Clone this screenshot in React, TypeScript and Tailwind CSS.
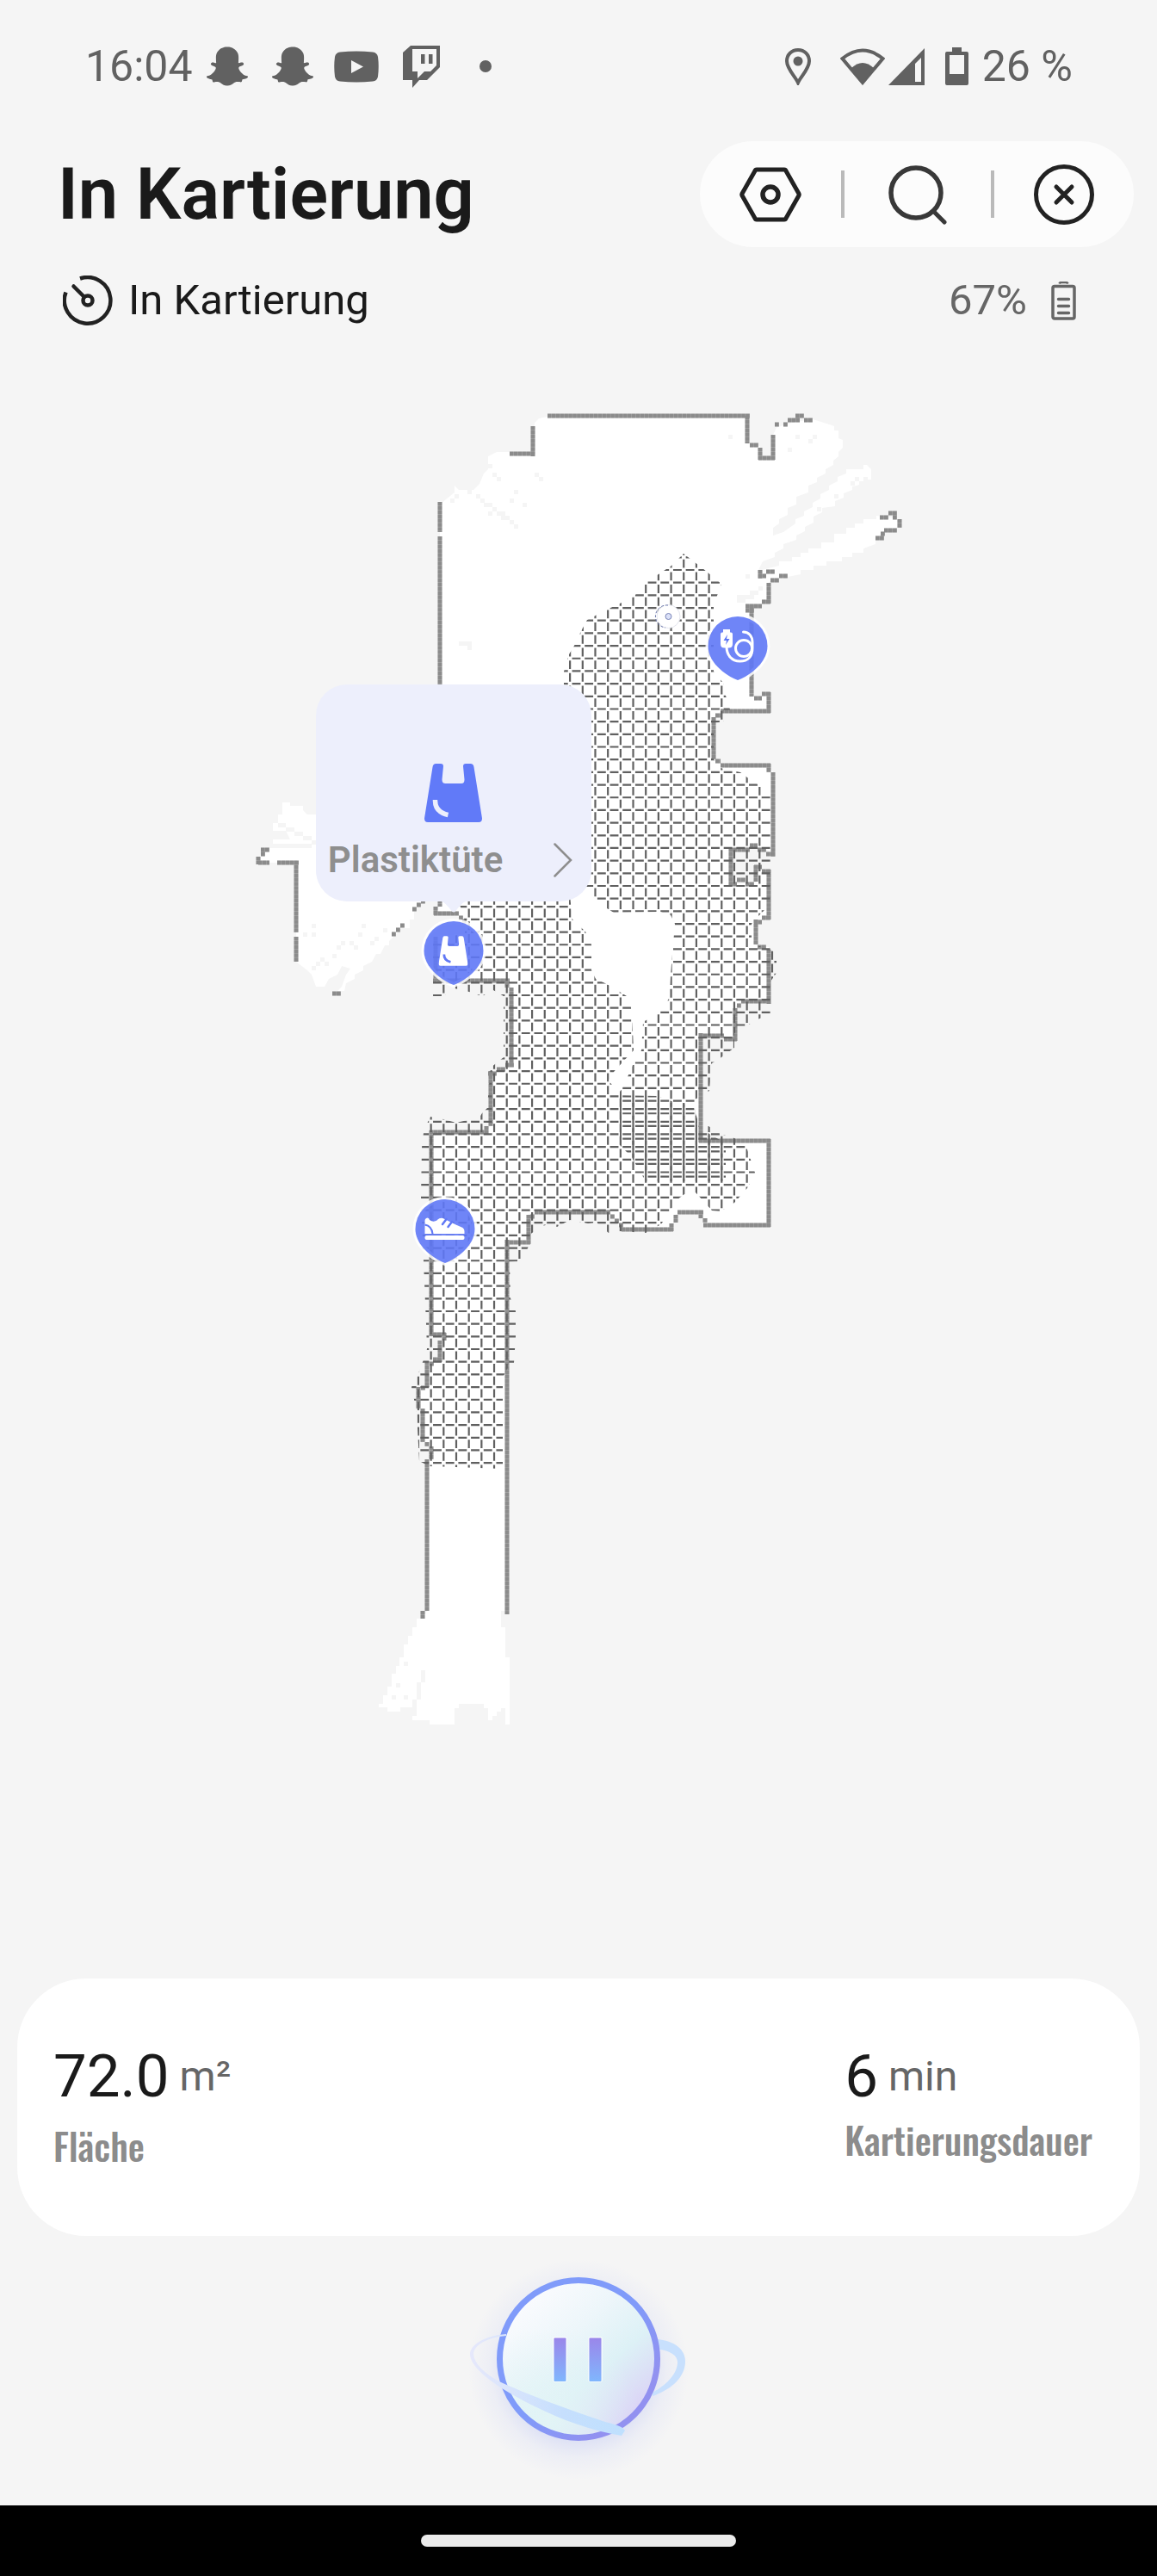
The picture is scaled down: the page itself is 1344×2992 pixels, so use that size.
import type {ReactNode} from "react";
import {FaSnapchatGhost} from "react-icons/fa";

/* Map drawing space: x 0..1344, y 400..2298 */
const MAP_W = 1344;
const MAP_TOP = 400;
const MAP_H = 1898;
const STEP = 14.68;

const FLOOR =
    "636,484 626,486 621,491 619,528 592,525 577,525 567,530 567,545 562,550 557,562 550,569 533,569 528,564 528,572 518,580 " +
    "511,586 511,1050 506,1063 530,1063 540,1072 540,1085 506,1087 506,1139 592,1139 594,1147 594,1239 570,1246 570,1308 " +
    "562,1315 501,1315 501,1550 515,1550 511,1580 496,1583 496,1611 487,1613 487,1636 491,1636 491,1675 501,1680 501,1693 " +
    "496,1695 496,1871 491,1880 484,1880 484,1890 479,1890 479,1900 474,1900 474,1910 469,1910 469,1925 464,1925 464,1935 " +
    "460,1935 460,1944 455,1944 455,1959 450,1959 450,1969 445,1969 445,1979 440,1979 440,1983 450,1983 450,1988 465,1988 " +
    "465,1983 479,1983 484,1983 484,1993 479,1993 479,1998 499,1998 499,2003 528,2003 528,1984 533,1984 533,1979 562,1979 " +
    "562,1984 567,1984 567,1998 572,1998 572,1993 577,1993 577,1988 582,1988 582,1984 587,1984 587,2003 592,2003 592,1925 " +
    "587,1925 587,1890 582,1890 582,1871 589,1871 589,1442 614,1442 614,1410 621,1408 709,1408 721,1428 780,1428 785,1410 " +
    "814,1408 819,1423 893,1423 893,1325 814,1325 814,1202 841,1203 854,1207 854,1170 861,1163 893,1163 893,1100 878,1098 " +
    "878,1070 893,1065 893,1010 878,1007 878,1025 849,1027 849,987 871,982 890,987 898,992 898,897 893,889 834,887 829,880 " +
    "829,833 837,826 893,826 893,806 878,811 873,805 873,705 893,700 893,676 915,670 930,667 930,662 945,662 945,657 960,657 " +
    "960,652 978,652 978,647 990,647 990,642 1003,642 1003,637 1017,632 1017,625 1030,615 1042,613 1042,602 1018,599 1018,603 " +
    "1003,603 1003,608 993,608 993,613 983,613 983,620 969,620 969,630 954,630 954,637 939,637 939,642 930,642 930,647 920,647 " +
    "920,652 905,652 905,657 885,662 881,662 886,652 900,647 900,642 910,637 910,632 925,627 925,622 935,617 935,612 945,607 " +
    "945,600 955,595 955,590 970,588 970,582 980,578 980,573 990,569 990,565 1003,562 1003,557 1012,557 1012,545 1007,540 " +
    "1003,540 1003,545 983,545 983,550 973,554 973,559 963,564 963,569 953,574 953,579 944,584 944,589 934,594 934,599 924,603 " +
    "924,608 910,618 898,622 898,613 905,608 905,603 915,598 915,590 925,586 925,577 939,572 939,564 949,560 949,555 959,550 " +
    "959,545 968,540 968,535 974,530 974,525 979,520 979,511 974,509 974,500 969,500 969,495 954,490 944,487 925,490 912,493 " +
    "902,497 898,505 898,532 883,532 883,518 868,515 868,484";

const LEFT_ROOM =
    "328,932 337,932 337,936 352,936 352,941 357,946 520,946 520,1047 491,1047 481,1058 481,1068 476,1068 476,1078 466,1078 " +
    "462,1083 452,1093 452,1098 447,1098 442,1108 437,1108 432,1117 422,1122 422,1127 412,1132 412,1137 402,1142 400,1151 392,1151 " +
    "397,1146 402,1132 407,1125 397,1122 392,1132 382,1137 377,1146 367,1146 362,1132 357,1127 344,1117 344,1002 300,1002 " +
    "305,985 362,985 362,980 317,980 317,975 337,975 332,965 317,965 317,956 323,956 323,946 328,946";

const CLEANED_UPPER =
    "794,643 816,660 838,678 829,703 829,780 840,793 843,808 848,824 840,838 829,840 829,882 837,892 860,897 868,903 882,912 " +
    "895,925 895,1050 882,1063 873,1073 873,1098 893,1100 902,1107 902,1130 895,1140 895,1178 880,1184 870,1190 853,1200 " +
    "853,1217 838,1228 827,1235 824,1267 810,1275 806,1282 812,1310 843,1328 843,1372 750,1372 733,1343 720,1330 720,1268 " +
    "725,1260 735,1237 745,1220 747,1187 765,1177 777,1160 780,1120 784,1073 779,1063 767,1059 713,1060 705,1055 690,1043 " +
    "680,1032 655,1000 655,780 661,760 667,750 675,733 682,720 705,708 722,700 737,692 752,675 765,667 780,657";

const CLEANED_LOWER =
    "533,1047 662,1040 665,1068 680,1082 687,1097 687,1127 692,1137 705,1143 728,1157 733,1170 735,1197 736,1220 722,1235 " +
    "713,1245 707,1255 720,1272 763,1273 780,1279 806,1285 812,1310 823,1308 837,1317 853,1322 867,1332 872,1347 877,1362 " +
    "868,1380 853,1397 837,1407 827,1406 808,1385 795,1387 787,1393 778,1407 768,1422 750,1432 720,1430 707,1432 693,1420 " +
    "683,1421 662,1417 647,1425 633,1423 618,1432 613,1450 603,1465 592,1466 593,1508 599,1523 599,1553 597,1583 589,1590 " +
    "584,1600 584,1706 499,1703 487,1697 484,1640 478,1611 485,1598 491,1582 496,1567 495,1538 492,1465 489,1390 490,1333 " +
    "492,1316 497,1303 500,1297 515,1300 530,1304 543,1301 555,1301 560,1293 566,1287 567,1273 570,1240 585,1228 585,1157 " +
    "573,1150 560,1157 545,1152 528,1148 515,1157 502,1157 503,1090 540,1085 540,1070";

const WALLS = [
    "M636 483H871M868 483V515M871 517H881M883 520V534M881 532H900M898 534V505",
    "M900 493h5M910 493h5M915 488H929M924 483H934M934 488H944",
    "M619 495V530M592 527H621M511 583V618M511 623V800",
    "M1032 596H1042M1022 601H1032M1037 601h5M1045 603V613M1027 616H1042M1023 620h5M1017 625H1027",
    "M883 662V672M881 669H890M890 664H900M905 669H915M895 674H905M893 677V701M885 699H895M866 704H885M866 709H876",
    "M873 703V809M876 811H885M885 806H895M893 804V828M837 826H895M831 831H837M829 833V882M831 884H837M837 889H895",
    "M893 887V897M898 897V995M890 992H900M847 987H871M871 982H880M880 987H890M849 985V1029M847 1027H856M856 1022H866",
    "M866 1027H876M878 1005V1024M876 1007H885M885 1012H895M893 1010V1068M885 1066H895M876 1071H885M878 1068V1097",
    "M880 1100H890M893 1103V1166M861 1163H895M856 1168h5M854 1171V1209M841 1207H856M812 1203H841M814 1200V1327",
    "M812 1325H895M893 1323V1425M817 1423H895M819 1415v5M814 1406V1415M787 1408H817M785 1411V1420M780 1421V1430",
    "M722 1428H782M719 1423h5M714 1418h5M709 1413h5M621 1408H709M616 1413h5M614 1411V1445M587 1443H616M589 1440V1875",
    "M503 1139H592M589 1141V1147M594 1147V1239M587 1237H597M577 1242H587M567 1247H577M570 1244V1308M565 1308V1317",
    "M499 1315H567M501 1313V1552M503 1550H518M516 1548V1557M511 1557V1582M503 1579H513M499 1584h5M496 1581V1611",
    "M489 1612H494M486 1611V1636M491 1636V1675M496 1675v5M501 1680V1695M496 1695V1871M491 1871V1880",
    "M504 1061H533M506 1053V1063M511 1045V1053M533 1066h5M537 1070h5M506 1088V1139",
    "M303 987H313M303 992h5M300 995V1004M300 1002H313M322 1002H347M344 1000V1083M344 1088V1117M386 1154H396",
    "M455 1085h5M460 1080h5M465 1075h5M479 1056h5M484 1051h5M489 1047h5",
].join("");

/* Unscanned cells inside the floor */
const HOLES =
    "M567 539h5v5h-5zM572 549h5v5h-5zM577 554h5v5h-5zM621 549h5v5h-5zM626 554h5v5h-5zM597 569h5v5h-5zM592 579h5v5h-5z" +
    "M607 584h5v5h-5zM543 569h5v5h-5zM553 574h5v5h-5zM558 579h5v5h-5zM562 584h10v5h-10zM572 589h5v5h-5zM567 594h5v5h-5z" +
    "M577 594h10v5h-10zM582 599h10v5h-10zM592 604h5v5h-5zM597 609h5v5h-5zM533 745h15v5h-15zM543 750h5v5h-5z" +
    "M528 574h5v5h-5zM523 579h5v5h-5zM846 505h5v5h-5zM924 505h5v5h-5zM944 505h5v5h-5zM939 510h5v5h-5zM915 520h5v5h-5z" +
    "M988 559h5v5h-5zM993 554h5v5h-5zM998 559h5v5h-5zM1003 554h5v5h-5zM969 574h5v5h-5zM949 589h5v5h-5z" +
    "M866 667h5v5h-5zM856 691h10v9h-10zM866 691h10v5h-10zM871 686h10v5h-10zM881 681h5v5h-5z" +
    "M323 956h9v5h-9zM332 961h10v5h-10zM342 966h10v5h-10zM352 971h10v5h-10zM362 976h5v5h-5z" +
    "M362 1073h5v5h-5zM362 1083h5v5h-5zM352 1083h5v5h-5zM420 1073h5v5h-5zM416 1083h5v5h-5zM445 1078h5v5h-5z" +
    "M435 1088h5v5h-5zM406 1093h5v5h-5zM396 1093h5v5h-5zM430 1093h5v5h-5zM391 1098h5v5h-5zM411 1098h5v5h-5z" +
    "M386 1108h5v5h-5zM372 1112h5v5h-5zM377 1117h5v5h-5zM367 1117h5v5h-5zM362 1122h5v5h-5z" +
    "M469 1930h5v5h-5zM460 1955h5v5h-5zM455 1969h5v5h-5zM469 1969h5v5h-5zM489 1940h5v14h-5zM484 1954h5v20h-5zM479 1974h5v9h-5z";

function gridPath(x0: number, x1: number, y0: number, y1: number) {
    let d = "";
    for (let x = x0; x <= x1; x += STEP) {
        d += `M${x.toFixed(2)} ${(y0 + 2.4).toFixed(2)}V${y1}`;
    }
    for (let y = y0; y <= y1; y += STEP) {
        d += `M${(x0 + 2.4).toFixed(2)} ${y.toFixed(2)}H${x1}`;
    }
    return d;
}

const GRID_UPPER = gridPath(530 - 3 * STEP, 920, 662 - 2 * STEP, 1400);
const GRID_LOWER = gridPath(530 - 4 * STEP, 920, 1141.3 - 8 * STEP, 1720);

function FloorPlan() {
    return (
        <svg viewBox={`0 ${MAP_TOP} ${MAP_W} ${MAP_H}`} className="block h-auto w-full" aria-hidden="true">
            <defs>
                <clipPath id="upper">
                    <polygon points={CLEANED_UPPER} />
                </clipPath>
                <clipPath id="lower">
                    <polygon points={CLEANED_LOWER} />
                </clipPath>
            </defs>
            <polygon points={LEFT_ROOM} fill="#fff" />
            <polygon points={FLOOR} fill="#fff" />
            <path d={HOLES} fill="#f5f5f5" />
            <path d={WALLS} fill="none" stroke="#a4a4a4" strokeWidth="5" />
            <path d={WALLS} fill="none" stroke="#8b8b8b" strokeWidth="4.500" strokeDasharray="4.2 0.7" />
            <g fill="none" stroke="#606060" strokeWidth="2.200" strokeDasharray="9.9 4.78">
                <path d={GRID_UPPER} clipPath="url(#upper)" />
                <path d={GRID_LOWER} clipPath="url(#lower)" />
            </g>
            {/* robot */}
            <circle cx="776.5" cy="716" r="13.5" fill="#fff" stroke="#e3e5ee" strokeWidth="1" />
            <path d="M776 703a13 13 0 0 0-3 26" fill="none" stroke="#6672a8" strokeWidth="1" strokeDasharray="3 2" />
            <circle cx="776.5" cy="716" r="3.5" fill="#dbe1f8" stroke="#7a85b8" strokeWidth="1" />
        </svg>
    );
}

function BagShape({detail}: {detail: string}) {
    return (
        <>
            <path
                fill="currentColor"
                d="M13.500 0H19Q22 0 22 3L20.500 18.500Q20.500 23 24.500 23H43Q46.500 23 46.500 18.500L45 3Q45 0 48 0H53.500Q57 0 57.500 4L67 63.500Q67 68 63 68H4Q0 68 0 63.500L9.500 4Q10 0 13.500 0Z"
            />
            <path d="M12.500 42Q12 56 27.500 59.500" fill="none" stroke={detail} strokeWidth="5.500" />
        </>
    );
}

function CableShape() {
    return (
        <g>
            <path d="M17.500 15h8v3.500h1q2 0 2 2V32q0 4.500-4.500 4.500h-5q-4.500 0-4.500-4.500V20.500q0-2 2-2h1z" fill="#fff" />
            <path d="M22.500 21l-4.500 7h3.500l-1 5 4.500-7H21.500z" fill="#6078f5" />
            <circle cx="41.500" cy="37" r="9.500" fill="none" stroke="#fff" strokeWidth="3" />
            <path
                d="M41 18C47.500 18 51.500 23 51.500 30V37C51.500 47 46 52 37 52C27.500 52 21.500 45 21.500 35"
                fill="none"
                stroke="#fff"
                strokeWidth="3"
                strokeLinecap="round"
            />
        </g>
    );
}

function ShoeShape() {
    return (
        <g>
            <rect x="11" y="42" width="46" height="5" rx="2" fill="#fff" />
            <path d="M11 40V25Q11 22 14 21.500Q16 21.500 16.500 24Q21 27 25 24.500Q28 21 32 22L46 29L55 33Q57 34.500 57 37V40Z" fill="#fff" />
            <path d="M11 29.500Q19 31 20 40" fill="none" stroke="#6078f5" strokeWidth="2" />
            <path d="M36 23L31.500 29M42.500 26L38 32" stroke="#6078f5" strokeWidth="2.500" strokeLinecap="round" />
        </g>
    );
}

interface PinProps {
    label: string;
    x: number;
    y: number;
    children: ReactNode;
}

function Pin({label, x, y, children}: PinProps) {
    return (
        <button
            type="button"
            aria-label={label}
            className="absolute -translate-x-1/2 -translate-y-full"
            style={{left: `${(x / MAP_W) * 100}%`, top: `${((y - MAP_TOP) / MAP_H) * 100}%`}}
        >
            <svg viewBox="0 0 69 74" className="block h-[74px] w-[69px] overflow-visible">
                <path
                    d="M34.500 74C21 69 0 54 0 34.500a34.500 34.500 0 0 1 69 0C69 54 48 69 34.500 74z"
                    fill="none"
                    stroke="#fff"
                    strokeOpacity="0.85"
                    strokeWidth="6"
                />
                <path
                    d="M34.500 74C21 69 0 54 0 34.500a34.500 34.500 0 0 1 69 0C69 54 48 69 34.500 74z"
                    fill="#5f78f6"
                    fillOpacity="0.9"
                />
                {children}
            </svg>
        </button>
    );
}

function StatusBar() {
    return (
        <div className="flex items-center justify-between pt-12 pr-[98px] pl-[99px] text-[50px] leading-[58px] font-normal text-[#616161]">
            <div className="flex items-center">
                <span>16:04</span>
                <FaSnapchatGhost className="ml-4 h-12 w-12" />
                <FaSnapchatGhost className="ml-7 h-12 w-12" />
                <svg viewBox="0 0 52 37" className="ml-6 h-[37px] w-[52px]">
                    <path
                        fillRule="evenodd"
                        fill="currentColor"
                        d="M7 1.500Q26-.5 45 1.500Q50 2 51 7Q52.500 18 51 30Q50 35 45 35.500Q26 37.500 7 35.500Q2 35 1 30Q-.5 18 1 7Q2 2 7 1.500ZM20 11V26L34 18.500Z"
                    />
                </svg>
                <svg viewBox="0 0 43 50" className="ml-7 h-[50px] w-[43px]">
                    <path
                        fillRule="evenodd"
                        fill="currentColor"
                        d="M0 9L9 1H43V26L28 41H19L11 50V41H0ZM11 5V31H17V39L25 31H32L39 24V5ZM21 11h4.500v11H21zM30 11h4.500v11H30z"
                    />
                </svg>
                <span className="ml-[46px] h-3.5 w-3.5 rounded-full bg-[#616161]" />
            </div>
            <div className="flex items-center">
                <svg viewBox="0 0 30 43" className="h-[43px] w-[30px]">
                    <path
                        d="M15 2C7.500 2 2 7.500 2 15C2 24 12 33 15 40C18 33 28 24 28 15C28 7.500 22.500 2 15 2z"
                        fill="none"
                        stroke="currentColor"
                        strokeWidth="4"
                    />
                    <circle cx="15" cy="15" r="5.500" fill="currentColor" />
                </svg>
                <svg viewBox="0 0 52 43" className="ml-[34px] h-[43px] w-[52px]">
                    <path d="M2.500 12Q26-7 49.500 12L26 40Z" fill="none" stroke="currentColor" strokeWidth="4" />
                    <path d="M13 23Q26 11 39 23L26 41Z" fill="currentColor" />
                </svg>
                <svg viewBox="0 0 42 43" className="ml-1 h-[43px] w-[42px]">
                    <path fillRule="evenodd" fill="currentColor" d="M42 0V43H0ZM38 11L31 18V39H38Z" />
                </svg>
                <svg viewBox="0 0 27 44" className="ml-6 h-11 w-[27px]">
                    <path
                        fillRule="evenodd"
                        fill="currentColor"
                        d="M8 0H19V5H25Q27 5 27 7V42Q27 44 25 44H2Q0 44 0 42V7Q0 5 2 5H8ZM5 9V31H22V9Z"
                    />
                </svg>
                <span className="ml-4">26 %</span>
            </div>
        </div>
    );
}

function Toolbar() {
    return (
        <nav className="flex h-[123px] items-center gap-[46px] rounded-full bg-[#fcfcfc] px-[46px]">
            <button type="button" aria-label="Einstellungen">
                <svg viewBox="0 0 72 64" className="h-16 w-[72px]" fill="none" stroke="#222">
                    <path d="M20 3H52Q53.500 3 54 4.500L69 31Q69.500 32 69 33L54 59.500Q53.500 61 52 61H20Q18.500 61 18 59.500L3 33Q2.500 32 3 31L18 4.500Q18.500 3 20 3z" strokeWidth="5" />
                    <circle cx="36" cy="32" r="9" strokeWidth="5.500" />
                </svg>
            </button>
            <span className="h-[55px] w-1 bg-[#bababa]" />
            <button type="button" aria-label="Suchen">
                <svg viewBox="0 0 72 72" className="h-[72px] w-[78px]" fill="none" stroke="#383838">
                    <circle cx="34" cy="34" r="29" strokeWidth="5.500" />
                    <path d="M55 56L67 68" strokeWidth="5" strokeLinecap="round" />
                </svg>
            </button>
            <span className="h-[55px] w-1 bg-[#bababa]" />
            <button type="button" aria-label="Schließen">
                <svg viewBox="0 0 70 70" className="h-[70px] w-[70px]" fill="none" stroke="#222">
                    <circle cx="35" cy="35" r="32.500" strokeWidth="5" />
                    <path d="M26 26L44 44M44 26L26 44" strokeWidth="5" strokeLinecap="round" />
                </svg>
            </button>
        </nav>
    );
}

function PauseButton() {
    return (
        <button type="button" aria-label="Pause" className="block">
            <svg viewBox="2 0 300 280" className="block h-[280px] w-[300px] overflow-visible">
                <defs>
                    <radialGradient id="glow" cx="0.5" cy="0.5" r="0.5">
                        <stop offset="0.6" stopColor="#7f92f5" stopOpacity="0.24" />
                        <stop offset="0.8" stopColor="#8fa0f5" stopOpacity="0.08" />
                        <stop offset="1" stopColor="#8fa0f5" stopOpacity="0" />
                    </radialGradient>
                    <linearGradient id="face" x1="0.2" y1="0.1" x2="0.85" y2="0.85">
                        <stop offset="0" stopColor="#fafbfe" />
                        <stop offset="0.35" stopColor="#edf6fa" />
                        <stop offset="0.65" stopColor="#ddf1f6" />
                        <stop offset="1" stopColor="#dbd3f6" />
                    </linearGradient>
                    <radialGradient id="lower-left" cx="0.3" cy="0.9" r="0.6">
                        <stop offset="0" stopColor="#e2f4f6" />
                        <stop offset="1" stopColor="#e2f4f6" stopOpacity="0" />
                    </radialGradient>
                    <linearGradient id="rim" x1="0" y1="0" x2="1" y2="1">
                        <stop offset="0.5" stopColor="#809bfa" />
                        <stop offset="0.8" stopColor="#9291f0" />
                    </linearGradient>
                    <linearGradient id="bar" x1="0" y1="0" x2="0" y2="1">
                        <stop offset="0" stopColor="#9a86ea" />
                        <stop offset="1" stopColor="#80b6fd" />
                    </linearGradient>
                    <linearGradient id="orbit" x1="0" y1="0" x2="1" y2="0">
                        <stop offset="0" stopColor="#e6e8fb" />
                        <stop offset="0.6" stopColor="#c6dffd" />
                        <stop offset="1" stopColor="#bfe0fe" />
                    </linearGradient>
                </defs>
                <circle cx="152" cy="152" r="128" fill="url(#glow)" />
                <path d="M238 117C264 117 277 130 276 144C275 163 258 176 238 183L238 179C254 170 266 158 267 145C268 136 258 129 238 128Z" fill="#c8e0fd" />
                <circle cx="152" cy="140" r="92" fill="url(#face)" />
                <circle cx="152" cy="140" r="89" fill="url(#lower-left)" />
                <circle cx="152" cy="140" r="91.500" fill="none" stroke="url(#rim)" strokeWidth="7" />
                <path
                    d="M68 111C44 113 28 122 26 133C25 147 46 165 80 184C120 206 160 222 202 229L206 223C202 217 193 216 180 212C130 195 95 182 62 167C42 157 31 145 30 134C31 124 45 115 68 113Z"
                    fill="url(#orbit)"
                />
                <rect x="122" y="114" width="17" height="53" rx="3" fill="#fff" opacity="0.6" />
                <rect x="163" y="114" width="17" height="53" rx="3" fill="#fff" opacity="0.6" />
                <rect x="123.500" y="115.500" width="14" height="50.500" rx="1" fill="url(#bar)" />
                <rect x="164.500" y="115.500" width="14" height="50.500" rx="1" fill="url(#bar)" />
            </svg>
        </button>
    );
}

export default function App() {
    return (
        <div className="flex min-h-screen w-full flex-col bg-[#f5f5f5] font-[Roboto,sans-serif] text-[#1a1a1a]">
            <StatusBar />

            {/* Header */}
            <header className="flex items-center justify-between pt-[58px] pr-[27px] pl-[67px]">
                <h1 className="text-[83px] leading-[96px] font-semibold">In Kartierung</h1>
                <Toolbar />
            </header>

            <div className="flex items-center justify-between pt-8 pr-[94px] pb-[21px] pl-[73px] text-[49px] leading-[60px]">
                <div className="flex items-center gap-[18px]">
                    <svg viewBox="0 0 58 58" className="h-[58px] w-[58px]" fill="none" stroke="#222" strokeWidth="4.500">
                        <path d="M20 3.500A26.800 26.800 0 1 1 3.500 19.500" />
                        <circle cx="29" cy="29" r="5.500" />
                        <path d="M25 25L12.500 12.500" strokeLinecap="round" />
                    </svg>
                    <span>In Kartierung</span>
                </div>
                <div className="flex items-center gap-7 text-[#666]">
                    <span>67%</span>
                    <svg viewBox="0 0 29 45" className="h-[45px] w-[29px]" fill="none" stroke="currentColor" strokeWidth="3.500">
                        <path d="M9.500 2.500Q10 1 12 1H17Q19 1 19.500 2.500" strokeWidth="2.500" />
                        <rect x="2" y="5.500" width="25" height="37.500" rx="2" />
                        <path d="M8.500 20.500h12M8.500 28.500h12M8.500 36.500h12" strokeLinecap="round" />
                    </svg>
                </div>
            </div>

            {/* Map */}
            <main className="relative">
                <FloorPlan />
                <Pin label="Kabel" x={857} y={790}>
                    <CableShape />
                </Pin>
                <Pin label="Plastiktüte" x={527} y={1144}>
                    <svg x="17" y="17" width="34" height="35" viewBox="0 0 67 68" className="text-white">
                        <BagShape detail="#6078f5" />
                    </svg>
                </Pin>
                <Pin label="Schuhe" x={517} y={1467}>
                    <ShoeShape />
                </Pin>

                <button
                    type="button"
                    className="absolute top-[34.1%] left-[39.2%] flex w-80 -translate-x-1/2 -translate-y-full flex-col rounded-[36px] bg-[#edeffc] px-3.5 pt-[92px] pb-3 text-[#8e8e8e]"
                >
                    <svg viewBox="0 0 67 68" className="h-[68px] w-[67px] self-center text-[#617af8]">
                        <BagShape detail="#edeffc" />
                    </svg>
                    <span className="flex w-full items-center justify-between pt-2 pr-2 text-[42px] leading-[72px] font-semibold">
                        Plastiktüte
                        <svg viewBox="0 0 22 40" className="h-10 w-[22px]" fill="none" stroke="currentColor" strokeWidth="2.500">
                            <path d="M1.500 1.500L20 20L1.500 38.500" strokeLinecap="round" />
                        </svg>
                    </span>
                    <svg viewBox="0 0 28 14" className="absolute top-full left-1/2 h-3.5 w-7 -translate-x-1/2">
                        <path d="M0 0H28Q24 1 16 11.500Q14 13.500 12 11.500Q4 1 0 0Z" fill="#edeffc" />
                    </svg>
                </button>
            </main>

            {/* Stats */}
            <section className="mx-5 flex justify-between rounded-[80px] bg-white pt-[74px] pr-[55px] pb-[72px] pl-[42px]">
                <div>
                    <p className="flex items-center gap-3 text-[48px] leading-[80px] text-[#666]">
                        <span className="text-[69px] text-[#1a1a1a]">72.0</span>m²
                    </p>
                    <p className="pt-[7px] font-[Oswald,Roboto,sans-serif] text-[43px] leading-[66px] font-medium text-[#8c8c8c]">Fläche</p>
                </div>
                <div>
                    <p className="flex items-center gap-3 text-[48px] leading-[80px] text-[#666]">
                        <span className="text-[69px] text-[#1a1a1a]">6</span>min
                    </p>
                    <p className="font-[Oswald,Roboto,sans-serif] text-[43px] leading-[66px] font-medium text-[#8c8c8c]">Kartierungsdauer</p>
                </div>
            </section>

            <div className="flex justify-center pt-[3px] pb-[29px]">
                <PauseButton />
            </div>

            {/* System navigation */}
            <footer className="mt-auto flex h-[82px] items-center justify-center bg-black">
                <span className="h-3.5 w-[366px] rounded-full bg-[#ebebeb]" />
            </footer>
        </div>
    );
}
